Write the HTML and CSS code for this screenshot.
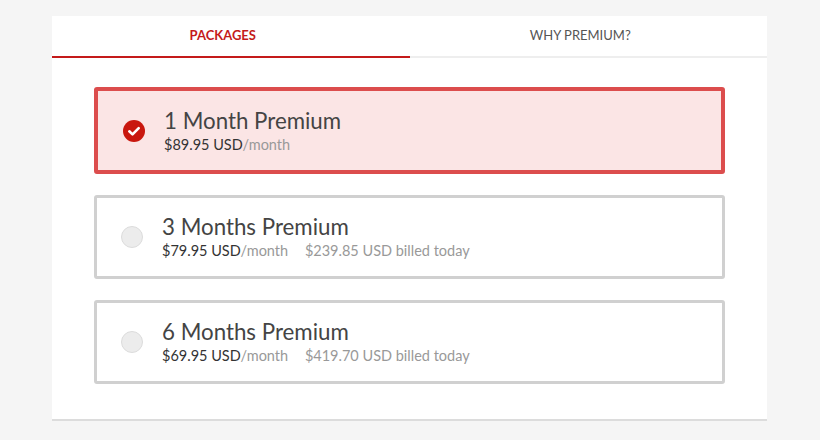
FILE: index.html
```html
<!DOCTYPE html>
<html lang="en">
<head>
    <meta charset="UTF-8">
    <title>Premium packages</title>
    <link rel="stylesheet" href="styles.css">
</head>
<body>
    <div class="card">
        <div class="tabs">
            <div class="tab active">PACKAGES</div>
            <div class="tab">WHY PREMIUM?</div>
        </div>
        <div class="options">
            <div class="option selected">
                <span class="radio checked">
                    <svg width="22" height="22" viewBox="0 0 22 22"><circle cx="11" cy="11" r="11" fill="#c9170e"/><path d="M6.3 11.3l3.2 3.1 6.2-6.3" fill="none" stroke="#fff" stroke-width="2.6" stroke-linecap="round" stroke-linejoin="round"/></svg>
                </span>
                <div class="info">
                    <div class="name">1 Month Premium</div>
                    <div class="price"><b>$89.95 USD</b>/month</div>
                </div>
            </div>
            <div class="option">
                <span class="radio"></span>
                <div class="info">
                    <div class="name">3 Months Premium</div>
                    <div class="price"><b>$79.95 USD</b>/month <span class="billed">$239.85 USD billed today</span></div>
                </div>
            </div>
            <div class="option">
                <span class="radio"></span>
                <div class="info">
                    <div class="name">6 Months Premium</div>
                    <div class="price"><b>$69.95 USD</b>/month <span class="billed">$419.70 USD billed today</span></div>
                </div>
            </div>
        </div>
    </div>
</body>
</html>
```

FILE: styles.css
```css
body {
    margin: 0;
    padding: 16px 0 0 52px;
    background-color: #f5f5f5;
    font-family: Lato, "Open Sans", sans-serif;
    color: #444;
}
.card {
    width: 715px;
    background-color: white;
    border-bottom: 2px solid #dcdcdc;
}
.tabs {
    display: flex;
    border-bottom: 2px solid #eee;
}
.tab {
    flex: 1;
    text-align: center;
    font-size: 13px;
    color: #555;
    height: 40px;
    line-height: 38px;
    margin-bottom: -2px;
    padding-right: 16px;
}
.tab.active {
    color: #c41a1a;
    font-weight: bold;
    border-bottom: 2px solid #c41a1a;
}
.options {
    display: flex;
    flex-direction: column;
    gap: 21px;
    padding: 29px 42px 35px 42px;
}
.option {
    display: flex;
    align-items: center;
    height: 84px;
    box-sizing: border-box;
    border: 3px solid #d0d0d0;
    border-radius: 3px;
    padding-left: 24px;
}
.option.selected {
    height: 87px;
    border: 4px solid #dc4d4d;
    background-color: #fbe5e5;
    padding-left: 25px;
}
.radio {
    width: 20px;
    height: 20px;
    border-radius: 50%;
    background-color: #ececec;
    border: 1px solid #dcdcdc;
    margin-right: 19px;
    flex-shrink: 0;
}
.radio.checked {
    width: 22px;
    height: 22px;
    border: none;
    background: none;
    margin-right: 19px;
}
.radio svg {
    display: block;
}
.name {
    font-size: 22.3px;
    color: #444;
    line-height: 28px;
}
.price {
    font-size: 14.5px;
    color: #999;
    line-height: 20px;
}
.price b {
    color: #333;
    font-weight: normal;
}
.billed {
    margin-left: 13px;
}
```
